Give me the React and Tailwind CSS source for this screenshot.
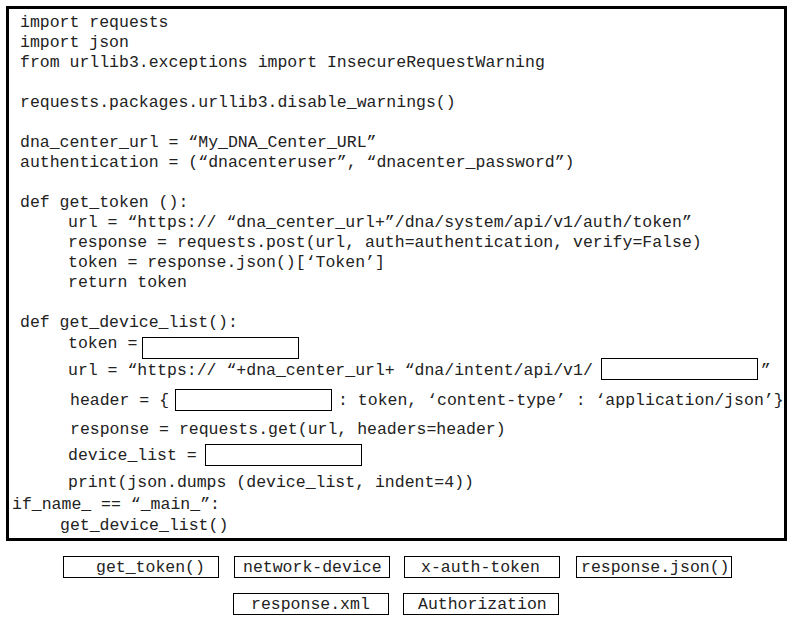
import React from "react";

const mono = { fontFamily: '"Liberation Mono", "Courier New", monospace' };

function Blank({ w = 157, cls = "" }) {
  return <div className={`border border-black bg-white h-[22px] shrink-0 ${cls}`} style={{ width: w }} />;
}

function L({ children, cls = "" }) {
  return <div className={`h-[20px] leading-[20px] whitespace-pre ${cls}`}>{children}</div>;
}

function Chip({ label, pl, cls = "" }) {
  return (
    <div className={`border border-black h-[22px] w-[156px] flex items-center leading-[20px] whitespace-pre pt-[1px] ${cls}`} style={{ paddingLeft: pl }}>
      {label}
    </div>
  );
}

export default function App() {
  return (
    <div className="bg-white w-[793px] h-[621px] pt-[6px] pl-[6px] text-[16.5px] text-[#222]" style={mono}>
      <div className="w-[781px] h-[535px] border-[3px] border-black pt-[4px] pl-[11px]">
        <L>import requests</L>
        <L>import json</L>
        <L>from urllib3.exceptions import InsecureRequestWarning</L>
        <L> </L>
        <L>requests.packages.urllib3.disable_warnings()</L>
        <L> </L>
        <L>dna_center_url = “My_DNA_Center_URL”</L>
        <L>authentication = (“dnacenteruser”, “dnacenter_password”)</L>
        <L> </L>
        <L>def get_token ():</L>
        <L cls="pl-[48px]">url = “https:// “dna_center_url+”/dna/system/api/v1/auth/token”</L>
        <L cls="pl-[48px]">response = requests.post(url, auth=authentication, verify=False)</L>
        <L cls="pl-[48px]">token = response.json()[‘Token’]</L>
        <L cls="pl-[48px]">return token</L>
        <L> </L>
        <L>def get_device_list():</L>

        <div className="h-[25px] flex items-start pl-[48px]">
          <div className="mt-[1px] h-[20px] leading-[20px] whitespace-pre">token =</div>
          <Blank cls="ml-[5px] mt-[4px]" />
        </div>
        <div className="h-[22px] flex items-start pl-[48px]">
          <div className="mt-[3px] h-[20px] leading-[20px] whitespace-pre">url = “https:// “+dna_center_url+ “dna/intent/api/v1/</div>
          <Blank cls="ml-[8px]" />
          <div className="mt-[3px] h-[20px] leading-[20px] ml-[3px]">”</div>
        </div>
        <div className="mt-[9px] h-[22px] flex items-start pl-[50px]">
          <div className="mt-[2px] h-[20px] leading-[20px] whitespace-pre">header = {"{"}</div>
          <Blank cls="ml-[6px]" />
          <div className="mt-[2px] h-[20px] leading-[20px] whitespace-pre ml-[6px]">: token, ‘content-type’ : ‘application/json’{"}"}</div>
        </div>
        <L cls="mt-[9px] pl-[50px]">response = requests.get(url, headers=header)</L>
        <div className="mt-[4px] h-[22px] flex items-start pl-[48px]">
          <div className="mt-[2px] h-[20px] leading-[20px] whitespace-pre">device_list =</div>
          <Blank cls="ml-[8px]" />
        </div>
        <L cls="mt-[7px] pl-[48px]">print(json.dumps (device_list, indent=4))</L>
        <L cls="mt-[2px] -ml-[8px]">if_name_ == “_main_”:</L>
        <L cls="mt-[1px] pl-[40px]">get_device_list()</L>
      </div>

      <div className="mt-[15px] flex">
        <Chip label="get_token()" pl={32} cls="ml-[57px]" />
        <Chip label="network-device" pl={8} cls="ml-[15px]" />
        <Chip label="x-auth-token" pl={16} cls="ml-[14px]" />
        <Chip label="response.json()" pl={4} cls="ml-[16px]" />
      </div>
      <div className="mt-[15px] flex">
        <Chip label="response.xml" pl={17} cls="ml-[227px]" />
        <Chip label="Authorization" pl={14} cls="ml-[14px]" />
      </div>
    </div>
  );
}
